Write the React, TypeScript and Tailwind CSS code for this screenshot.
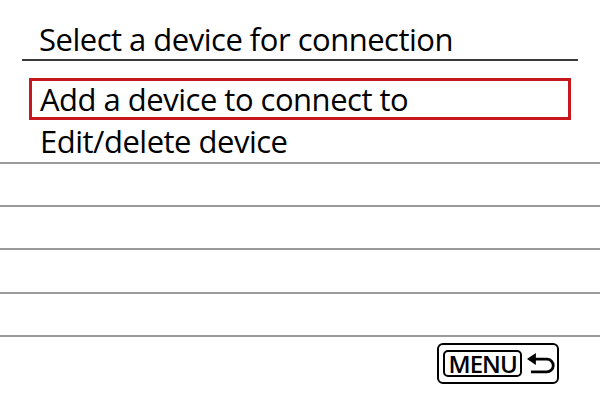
import React from "react";

export default function App() {
  const font = { fontFamily: '"Open Sans", "Noto Sans", sans-serif' };
  return (
    <div className="w-[600px] h-[400px] bg-white text-black flex flex-col" style={font}>
      <div className="h-[61px] mx-[22px] border-b-2 border-[#3a3a3a] flex items-end pl-[17px] pb-[4px]">
        <span className="text-[31px] leading-none tracking-[-0.5px]">Select a device for connection</span>
      </div>
      <div className="mt-[17px] mx-[29px] h-[42px] border-[3px] border-[#c8161d] flex items-center pl-[8px]">
        <span className="text-[31px] leading-none tracking-[-0.5px]">Add a device to connect to</span>
      </div>
      <div className="h-[44px] border-b-2 border-[#9a9a9a] flex items-center pl-[40px]">
        <span className="text-[31px] leading-none tracking-[-0.5px]">Edit/delete device</span>
      </div>
      <div className="h-[43px] border-b-2 border-[#9a9a9a]" />
      <div className="h-[43px] border-b-2 border-[#9a9a9a]" />
      <div className="h-[44px] border-b-2 border-[#9a9a9a]" />
      <div className="h-[43px] border-b-2 border-[#9a9a9a]" />
      <div className="flex justify-end pr-[41px] pt-[6px]">
        <div className="w-[122px] h-[41px] border-2 border-black rounded-[6px] flex items-center pl-[4px] gap-[3px]">
          <div className="h-[27px] w-[80px] border-2 border-black rounded-[5px] flex items-center justify-center">
            <span className="text-[24px] leading-none font-semibold tracking-[-1px]">MENU</span>
          </div>
          <svg width="32" height="26" viewBox="0 0 32 26" fill="none">
            <path d="M9 8 H22 a6.5 6.5 0 0 1 0 13 H6" stroke="black" strokeWidth="2.8" fill="none" />
            <path d="M2 8 L11 2 L11 14 Z" fill="black" />
          </svg>
        </div>
      </div>
    </div>
  );
}
